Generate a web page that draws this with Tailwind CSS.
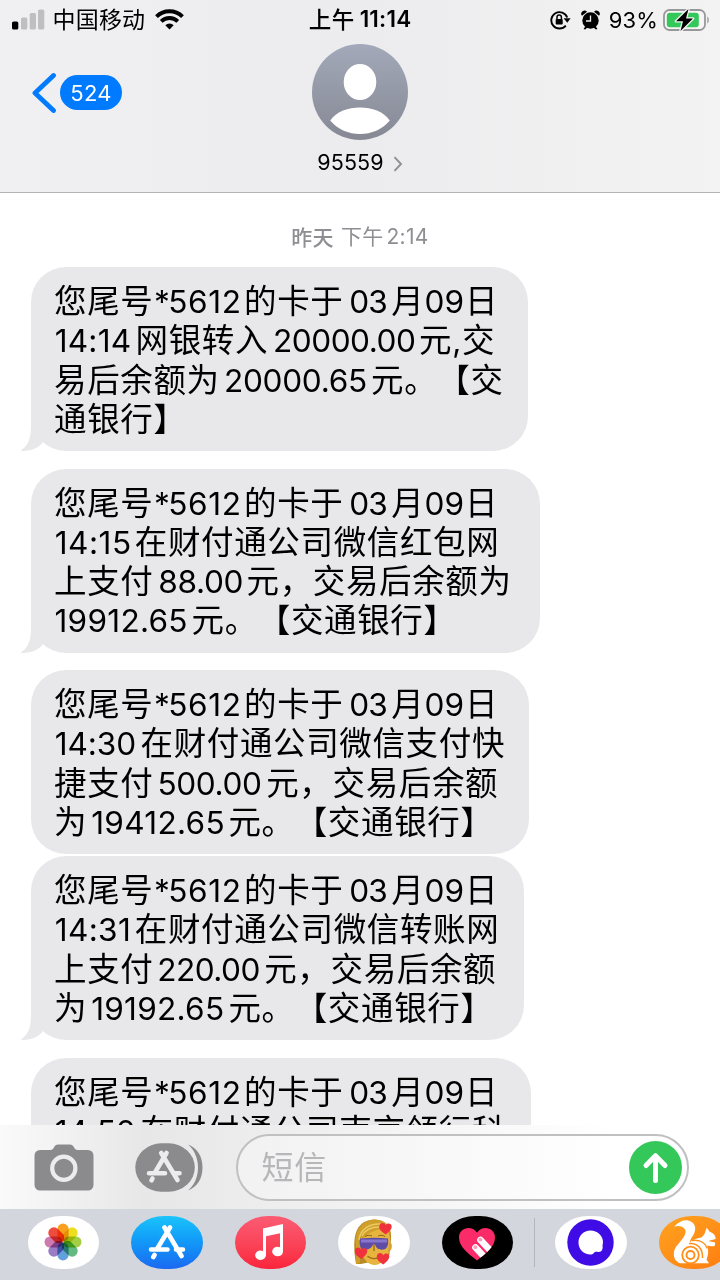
<!DOCTYPE html>
<html lang="zh-CN">
<head>
<meta charset="utf-8">
<title>95559</title>
<script src="https://cdn.jsdelivr.net/npm/@tailwindcss/browser@4"></script>
</head>
<body class="m-0 bg-white text-black [font-family:Inter,'Noto_Sans_CJK_SC',sans-serif]">
<div class="flex h-[1280px] w-[720px] flex-col overflow-hidden bg-white">

  <!-- Header -->
  <header class="flex h-[193px] shrink-0 flex-col border-b-[1.5px] border-[#b4b4b6] bg-linear-to-r from-[#f0f0f2] via-[#ececee] to-[#f3f3f3]">
    <div class="grid h-[40px] grid-cols-3 items-center">
      <div class="flex items-center pl-3">
        <svg class="mb-[2px] h-[21px] w-[33px]" viewBox="0 0 33 21"><rect x="0" y="12.5" width="6.3" height="8" rx="1.6"/><g fill="#bfbfc1"><rect x="9" y="8.500" width="6.300" height="12" rx="1.6"/><rect x="17.700" y="4" width="6.300" height="16.500" rx="1.6"/><rect x="26" y="0.500" width="6.300" height="20" rx="1.6"/></g></svg>
        <span class="mb-[3px] ml-[7.500px] text-[23px] leading-none tracking-[0.200px] whitespace-nowrap [font-family:'Noto_Sans_CJK_SC',sans-serif]">中国移动</span>
        <svg class="mb-[2px] ml-[10px] h-[21px] w-[29px] shrink-0" viewBox="0 0 29 21"><g fill="none" stroke="#000" stroke-width="3.900"><path d="M1.500 7.600a18.500 18.500 0 0 1 26 0"/><path d="M6.200 12.400a12 12 0 0 1 16.600 0"/></g><path d="M14.500 20.500l-4.200-4.300a6 6 0 0 1 8.400 0z"/></svg>
      </div>
      <div class="flex items-center justify-center gap-[5px] pb-[1px] text-[22.500px] leading-none"><span class="mb-[2px] font-medium tracking-[0.500px] [font-family:'Noto_Sans_CJK_SC',sans-serif]">上午</span><span class="font-semibold tracking-[0.200px]">11:14</span></div>
      <div class="flex items-center justify-end pr-[10px] pb-[1px]">
        <svg class="h-[20px] w-[21px]" viewBox="0 0 21 20"><path d="M15.800 15.600A8.200 8.200 0 1 1 17.200 7.500" fill="none" stroke="#000" stroke-width="1.900"/><path d="M13.600 8.200h7l-3.300 4.600z"/><rect x="5.700" y="8.900" width="7" height="5.600" rx=".8"/><path d="M7 9V7.300a2.200 2.200 0 0 1 4.400 0V9" fill="none" stroke="#000" stroke-width="1.500"/></svg>
        <svg class="ml-[10px] h-[20px] w-[19px]" viewBox="0 0 19 20"><circle cx="9.500" cy="10.500" r="8.200"/><path d="M1 5.800a3 3 0 0 1 5-4zM18 5.800a3 3 0 0 0-5-4zM2.500 19l2.500-3.500 2 1.500-2.800 2.500zM16.500 19L14 15.500 12 17l2.800 2.500z"/><path d="M9.500 5.500v5.500H5" fill="none" stroke="#eee" stroke-width="1.300"/></svg>
        <span class="ml-[9px] text-[22px] leading-none tracking-[0.100px]">93%</span>
        <svg class="ml-[5px] h-[24px] w-[47px]" viewBox="0 0 47 24"><rect x="1" y="2" width="41" height="20" rx="5.500" fill="#f6f6f6" stroke="#98989a" stroke-width="1.800"/><path d="M44.300 8.500c2 1 2 6 0 7z" fill="#98989a"/><rect x="3.800" y="4.700" width="32" height="14.600" rx="3" fill="#34c759"/><path d="M25.500 1L13 13.300h7L17.500 23 30 10.500h-7z" stroke="#f4f4f4" stroke-width="2.600" paint-order="stroke" stroke-linejoin="round"/></svg>
      </div>
    </div>
    <div class="grid grid-cols-3">
      <div class="flex h-[105px] items-center pl-8">
        <svg class="h-[42px] w-[25px]" viewBox="0 0 25 42"><path d="M21.500 3.500L3 21l18.500 17.500" fill="none" stroke="#007aff" stroke-width="4.800" stroke-linecap="round" stroke-linejoin="round"/></svg>
        <span class="ml-[3px] flex h-[35px] w-[62px] items-center justify-center rounded-full bg-[#007aff] text-[22px] leading-none tracking-[0.300px] text-white">524</span>
      </div>
      <div class="flex flex-col items-center pt-1">
        <svg class="h-[96px] w-[96px]" viewBox="0 0 96 96"><defs><linearGradient id="av" x1="0" y1="0" x2="0" y2="1"><stop offset="0" stop-color="#a3a9b9"/><stop offset="1" stop-color="#868994"/></linearGradient></defs><circle cx="48" cy="48" r="48" fill="url(#av)"/><ellipse cx="48" cy="38" rx="16.300" ry="18" fill="#fff"/><path d="M18.200 76.500C25 67.500 36 63.600 48 63.600s23 3.900 29.800 12.900C70 85.500 59.500 90 48 90s-22-4.500-29.800-13.500z" fill="#fff"/></svg>
        <div class="flex items-center pt-[12px]"><span class="text-[21.500px] leading-[20px] tracking-[0.100px]">95559</span><svg class="mt-[4px] ml-[9px] h-[16px] w-[10px]" viewBox="0 0 10 16"><path d="M1.500 1.200L8 8l-6.500 6.800" fill="none" stroke="#8e8e93" stroke-width="1.900"/></svg></div>
      </div>
    </div>
  </header>

  <!-- Conversation -->
  <main class="flex h-[932px] shrink-0 flex-col overflow-hidden text-[32.500px] leading-[39.330px] tracking-[0.640px] [font-family:'Noto_Sans_CJK_SC',sans-serif] [text-spacing-trim:space-all]">
    <div class="flex h-[74px] shrink-0 items-center justify-center gap-[7px] pt-[12px] text-[21px] leading-none tracking-[0.300px] text-[#8e8e93]"><span class="font-medium">昨天</span><span>下午<span class="ml-[3px] tracking-[0.300px] [font-family:Inter]">2:14</span></span></div>

    <div class="relative ml-[31px] h-[184px] w-[497px] shrink-0 rounded-[35px] bg-[#e8e8ea] pt-[12px] pl-[23px] whitespace-nowrap">
      <svg class="absolute bottom-0 left-[-11px] h-[40px] w-[24px]" viewBox="0 0 24 40"><path d="M11 0V14C11 27 9 34 .5 39.800 10 40.500 17.500 37.500 22.500 32L24 0z" fill="#e8e8ea"/></svg>
      <div class="relative h-[39.330px]">您尾号<span class="inline-block w-[90.600px] pl-[0.500px] text-[31.600px] leading-none tracking-[0.600px] [font-family:Inter]"><span class="tracking-[-1.500px]">*</span>5612</span>的卡于<span class="inline-block w-[47.900px] pl-[5.800px] text-[31.600px] leading-none tracking-[-0.800px] [font-family:Inter]">03</span>月<span class="inline-block w-[40.600px] text-[31.600px] leading-none tracking-normal [font-family:Inter]">09</span>日</div>
      <div class="relative h-[39.330px]"><span class="inline-block w-[81.500px] pl-[0.700px] text-[31.600px] leading-none tracking-[0.200px] [font-family:Inter]">14:14</span>网银转入<span class="inline-block w-[151px] pl-[5px] text-[31.600px] leading-none tracking-[-0.500px] [font-family:Inter]">20000.00</span>元<span class="inline-block w-[9.700px] text-[31.600px] leading-none tracking-normal [font-family:Inter]">,</span>交</div>
      <div class="relative h-[39.330px]">易后余额为<span class="inline-block w-[151.300px] pl-[4.300px] text-[31.600px] leading-none tracking-[-0.300px] [font-family:Inter]">20000.65</span>元。【交</div>
      <div class="relative h-[39.330px]">通银行】</div>
    </div>

    <div class="relative mt-[17.500px] ml-[31px] h-[184px] w-[509px] shrink-0 rounded-[35px] bg-[#e8e8ea] pt-[12px] pl-[23px] whitespace-nowrap">
      <svg class="absolute bottom-0 left-[-11px] h-[40px] w-[24px]" viewBox="0 0 24 40"><path d="M11 0V14C11 27 9 34 .5 39.800 10 40.500 17.500 37.500 22.500 32L24 0z" fill="#e8e8ea"/></svg>
      <div class="relative h-[39.330px]">您尾号<span class="inline-block w-[90.600px] pl-[0.500px] text-[31.600px] leading-none tracking-[0.600px] [font-family:Inter]"><span class="tracking-[-1.500px]">*</span>5612</span>的卡于<span class="inline-block w-[47.900px] pl-[5.800px] text-[31.600px] leading-none tracking-[-0.800px] [font-family:Inter]">03</span>月<span class="inline-block w-[40.600px] text-[31.600px] leading-none tracking-normal [font-family:Inter]">09</span>日</div>
      <div class="relative h-[39.330px]"><span class="inline-block w-[80.800px] pl-[0.700px] text-[31.600px] leading-none tracking-[0.500px] [font-family:Inter]">14:15</span>在财付通公司微信红包网</div>
      <div class="relative h-[39.330px]">上支付<span class="inline-block w-[93.100px] pl-[4.900px] text-[31.600px] leading-none tracking-[-0.350px] [font-family:Inter]">88.00</span>元，交易后余额为</div>
      <div class="relative h-[39.330px]"><span class="inline-block w-[137.500px] pl-[0.500px] text-[31.600px] leading-none tracking-[0.250px] [font-family:Inter]">19912.65</span>元。【交通银行】</div>
    </div>

    <div class="mt-[17.500px] ml-[31px] h-[184px] w-[498px] shrink-0 rounded-[35px] bg-[#e8e8ea] pt-[12px] pl-[23px] whitespace-nowrap">
      <div class="h-[39.330px]">您尾号<span class="inline-block w-[90.600px] pl-[0.500px] text-[31.600px] leading-none tracking-[0.600px] [font-family:Inter]"><span class="tracking-[-1.500px]">*</span>5612</span>的卡于<span class="inline-block w-[47.900px] pl-[5.800px] text-[31.600px] leading-none tracking-[-0.800px] [font-family:Inter]">03</span>月<span class="inline-block w-[40.600px] text-[31.600px] leading-none tracking-normal [font-family:Inter]">09</span>日</div>
      <div class="h-[39.330px]"><span class="inline-block w-[86.500px] pl-[0.700px] text-[31.600px] leading-none tracking-[-0.100px] [font-family:Inter]">14:30</span>在财付通公司微信支付快</div>
      <div class="h-[39.330px]">捷支付<span class="inline-block w-[112.800px] pl-[4px] text-[31.600px] leading-none tracking-[-0.400px] [font-family:Inter]">500.00</span>元，交易后余额</div>
      <div class="h-[39.330px]">为<span class="inline-block w-[141.300px] pl-[4px] text-[31.600px] leading-none tracking-[0.300px] [font-family:Inter]">19412.65</span>元。【交通银行】</div>
    </div>

    <div class="relative mt-[2px] ml-[31px] h-[184px] w-[493px] shrink-0 rounded-[35px] bg-[#e8e8ea] pt-[12px] pl-[23px] whitespace-nowrap">
      <svg class="absolute bottom-0 left-[-11px] h-[40px] w-[24px]" viewBox="0 0 24 40"><path d="M11 0V14C11 27 9 34 .5 39.800 10 40.500 17.500 37.500 22.500 32L24 0z" fill="#e8e8ea"/></svg>
      <div class="relative h-[39.330px]">您尾号<span class="inline-block w-[90.600px] pl-[0.500px] text-[31.600px] leading-none tracking-[0.600px] [font-family:Inter]"><span class="tracking-[-1.500px]">*</span>5612</span>的卡于<span class="inline-block w-[47.900px] pl-[5.800px] text-[31.600px] leading-none tracking-[-0.800px] [font-family:Inter]">03</span>月<span class="inline-block w-[40.600px] text-[31.600px] leading-none tracking-normal [font-family:Inter]">09</span>日</div>
      <div class="relative h-[39.330px]"><span class="inline-block w-[80.800px] pl-[0.700px] text-[31.600px] leading-none tracking-[0.350px] [font-family:Inter]">14:31</span>在财付通公司微信转账网</div>
      <div class="relative h-[39.330px]">上支付<span class="inline-block w-[110.800px] pl-[3.900px] text-[31.600px] leading-none tracking-[-0.550px] [font-family:Inter]">220.00</span>元，交易后余额</div>
      <div class="relative h-[39.330px]">为<span class="inline-block w-[141.300px] pl-[4px] text-[31.600px] leading-none tracking-[0.250px] [font-family:Inter]">19192.65</span>元。【交通银行】</div>
    </div>

    <div class="mt-[17.500px] ml-[31px] h-[184px] w-[500px] shrink-0 rounded-[35px] bg-[#e8e8ea] pt-[12px] pl-[23px] whitespace-nowrap">
      <div class="h-[39.330px]">您尾号<span class="inline-block w-[90.600px] pl-[0.500px] text-[31.600px] leading-none tracking-[0.600px] [font-family:Inter]"><span class="tracking-[-1.500px]">*</span>5612</span>的卡于<span class="inline-block w-[47.900px] pl-[5.800px] text-[31.600px] leading-none tracking-[-0.800px] [font-family:Inter]">03</span>月<span class="inline-block w-[40.600px] text-[31.600px] leading-none tracking-normal [font-family:Inter]">09</span>日</div>
      <div class="h-[39.330px]"><span class="inline-block w-[86.500px] pl-[0.700px] text-[31.600px] leading-none tracking-[-0.100px] [font-family:Inter]">14:50</span>在财付通公司南京领行科</div>
    </div>
  </main>

  <!-- Compose bar -->
  <section class="flex h-[84px] shrink-0 items-center bg-linear-to-r from-[#fafafa] from-0% via-[#e7e7e8] via-20% to-white to-85% pl-[33.500px]">
    <svg class="h-[47px] w-[60px]" viewBox="0 0 60 47"><path d="M6 6h10.500c1.800 0 2.600-.9 3.400-2.400C21 1.500 22 .5 24 .5h12c2 0 3 1 4.100 3.100.8 1.500 1.600 2.400 3.400 2.400H54a5.500 5.500 0 0 1 5.500 5.500V41a5.500 5.500 0 0 1-5.500 5.500H6A5.500 5.500 0 0 1 .5 41V11.500A5.500 5.500 0 0 1 6 6z" fill="#8b8b8d"/><circle cx="29.800" cy="24.300" r="11.600" fill="none" stroke="#ececee" stroke-width="4.200"/></svg>
    <svg class="ml-[41.500px] h-[49px] w-[68px]" viewBox="0 0 68 49"><path d="M53 1.500C62 5 67.500 13 67.500 24.500S62 44 53 47.500c6-5 10-13 10-23S59 6.500 53 1.500z" fill="#8b8b8d"/><rect x=".3" y=".3" width="59.500" height="48.400" rx="26" ry="24.200" fill="#8b8b8d"/><g fill="none" stroke="#ececee" stroke-width="4.600" stroke-linecap="round"><path d="M26.200 10L42.500 37M31.500 10L20 29.500M14 30.300h16M39 30.300h5.500M17.500 35.500l-1 1.800"/></g></svg>
    <div class="ml-[33px] flex h-[67px] w-[453px] items-center justify-between rounded-full border-2 border-[#c0c0c2] bg-white/30 pr-[5px] pl-[23.500px]">
      <span class="mb-[4px] text-[32px] leading-none tracking-[0.700px] text-[#b7b7b9] [font-family:'Noto_Sans_CJK_SC',sans-serif]">短信</span>
      <svg class="h-[53px] w-[53px]" viewBox="0 0 53 53"><circle cx="26.500" cy="26.500" r="26.500" fill="#34c759"/><path d="M26.500 39.500V15M17 24.500l9.500-9.800 9.500 9.800" fill="none" stroke="#fff" stroke-width="5" stroke-linecap="round" stroke-linejoin="round"/></svg>
    </div>
  </section>

  <!-- App strip -->
  <nav class="flex h-[71px] shrink-0 items-start bg-[#d3d6dd] pt-[6.500px] pl-[27.500px]">
    <div class="flex h-[53px] w-[71.500px] shrink-0 items-center justify-center rounded-[33px/26.500px] bg-white">
      <svg class="h-[40px] w-[40px]" viewBox="-20 -20 40 40"><g><rect x="-5.600" y="-18.500" width="11.200" height="18" rx="5.600" fill="#f9a11f"/><rect class="mix-blend-multiply" x="-5.600" y="-18.500" width="11.200" height="18" rx="5.600" fill="#ecdf20" transform="rotate(45)"/><rect class="mix-blend-multiply" x="-5.600" y="-18.500" width="11.200" height="18" rx="5.600" fill="#a4cf45" transform="rotate(90)"/><rect class="mix-blend-multiply" x="-5.600" y="-18.500" width="11.200" height="18" rx="5.600" fill="#62ba80" transform="rotate(135)"/><rect class="mix-blend-multiply" x="-5.600" y="-18.500" width="11.200" height="18" rx="5.600" fill="#62a0dc" transform="rotate(180)"/><rect class="mix-blend-multiply" x="-5.600" y="-18.500" width="11.200" height="18" rx="5.600" fill="#9a7cc4" transform="rotate(225)"/><rect class="mix-blend-multiply" x="-5.600" y="-18.500" width="11.200" height="18" rx="5.600" fill="#cf7aae" transform="rotate(270)"/><rect class="mix-blend-multiply" x="-5.600" y="-18.500" width="11.200" height="18" rx="5.600" fill="#f04c3e" transform="rotate(315)"/></g></svg>
    </div>
    <div class="ml-[32px] flex h-[53px] w-[71.500px] shrink-0 items-center justify-center rounded-[33px/26.500px] bg-linear-to-b from-[#1cc3fb] to-[#1d68f1]">
      <svg class="h-[36px] w-[40px]" viewBox="0 0 40 36"><g fill="none" stroke="#fff" stroke-width="4.600" stroke-linecap="round"><path d="M17.500 3.500L34.500 32M23 3.500L10 25M4 25.500h16.500M29 25.500h7M7.500 31l-1.200 2"/></g></svg>
    </div>
    <div class="ml-[32px] flex h-[53px] w-[71.500px] shrink-0 items-center justify-center rounded-[33px/26.500px] bg-linear-to-b from-[#fb5b74] to-[#fa233b]">
      <svg class="mr-[3px] h-[38px] w-[30px]" viewBox="0 0 30 38"><path d="M9 5.500L29 1v27.500a5.400 4.800 0 1 1-3-4.300V10.200L12 13.300v18.900a5.400 4.800 0 1 1-3-4.300z" fill="#fff"/></svg>
    </div>
    <div class="ml-[32px] flex h-[53px] w-[71.500px] shrink-0 items-center justify-center rounded-[33px/26.500px] bg-white">
      <svg class="h-[48px] w-[42px]" viewBox="0 0 42 48"><path d="M3 46C1 34 0 20 4 12 8 3 18 0 26 2c8 2 13 9 12 20l-2 18-28 6z" fill="#b98a25"/><path d="M9 22c2-8 10-14 26-10 3 8 3 18 0 24-3 7-8 11-13.500 11S10 42 9 34z" fill="#e8b440"/><path d="M36 25c4-2 4 8-1 9z" fill="#d9a036"/><path d="M3 28C1 14 8 2 22 1.500 32 2 37 7 38 16c-7-5-13-5-17-3C14 16 9 19 8 29l-1 16-4 1z" fill="#cf9f2c"/><path d="M6 22C7 12 16 5 28 6M9 18c3-6 9-9 17-9" fill="none" stroke="#ecc860" stroke-width="1.500"/><path d="M12 18.500c2-1.500 5-1.500 7-.5M25 18c2-1 5-1 7 .5" fill="none" stroke="#8a5f14" stroke-width="1"/><path d="M7 20.500c9-1 19-1 28 0 .8 5-.5 10.500-4 11-5 .5-7 0-9-5h-2c-2 5-6 5.500-10 5-3-.6-4-6-3-11z" fill="#5f4ca6"/><path d="M8 21.500h26v3H8z" fill="#8776cc"/><path d="M21 27v5.500M15 38.500c4 2.800 8 2.800 12 0" fill="none" stroke="#a06a17" stroke-width="1.400" stroke-linecap="round"/><g fill="#f0323c"><path id="h" d="M33 16.500c-5-3-7.500-5.500-6.500-9 1-3.300 5-3 6.200-.3 1.700-2.700 6-1.900 6 1.500 0 3-3 5-5.700 7.800z"/><use href="#h" transform="translate(-24.500 24.500)"/><use href="#h" transform="translate(-2.500 30)"/></g></svg>
    </div>
    <div class="ml-[32px] flex h-[53px] w-[71.500px] shrink-0 items-center justify-center rounded-[33px/26.500px] bg-black">
      <svg class="mt-[4px] h-[34px] w-[38px]" viewBox="0 0 38 34"><defs><clipPath id="ht"><path d="M19 33.500C10 26.500 1 19.500 1 10.500 1 1 13-2.500 19 5.500 25-2.500 37 1 37 10.500c0 9-9 16-18 23z"/></clipPath></defs><g clip-path="url(#ht)"><rect width="38" height="34" fill="#fb2b69"/><g stroke="#fff" stroke-width="6.600" stroke-linecap="round"><path d="M22.500 13l14 15M17.500 20.500l14 15"/></g><circle cx="22.400" cy="12.600" r="1.900" fill="#fb9dba"/><circle cx="17.400" cy="20.200" r="1.900" fill="#fb9dba"/></g></svg>
    </div>
    <div class="mt-[2px] ml-[20.500px] h-[49px] w-[1.500px] shrink-0 bg-[#b4b6bb]"></div>
    <div class="ml-[20px] flex h-[53px] w-[71.500px] shrink-0 items-center justify-center rounded-[33px/26.500px] bg-white">
      <svg class="mr-[1px] h-[47px] w-[47px]" viewBox="0 0 47 47"><circle cx="23.500" cy="23.500" r="23.200" fill="#400ce5"/><path d="M23.500 11.500c7 0 12.500 5 12.500 12l-.5 3c.5 2.200 0 5-1.800 6-1.700.9-5-.2-6.200.7-1 1.500-2.500 2.300-4 2.300-7 0-12-5.300-12-12s5-12 12-12z" fill="#fff"/></svg>
    </div>
    <div class="ml-[32px] flex h-[53px] w-[71.500px] shrink-0 items-center rounded-[33px/26.500px] bg-linear-to-br from-[#ffa31f] to-[#ff7b10] pl-[13px]">
      <svg class="h-[46px] w-[48px]" viewBox="0 0 48 46"><path d="M2 7.500C7 2.500 12 .8 16 1.500c6.500 1.200 8.500 7 6.500 12-1.500 4-4.500 6.500-4.500 10 3-3.500 7.500-4.500 11.500-5l3-3.500 2.200-6.500 3 4.300c4 1.200 6 4 6 7.200-2.500 1-5.500 1-7.500 2l7 1.500-.5 3.500c-3 .5-5.500.2-7.500-.6 1.800 5 .8 10.600-.7 14l2.500 3.800H8C3 42.500.8 37.500 2.300 31.500 4 25.500 12.500 20 13.500 13.500 14.300 9 9 5.500 2 7.500z" fill="#fff"/><g fill="none" stroke="#ff8f18"><circle cx="18.500" cy="36" r="8.300" stroke-width="1.800"/><circle cx="18.500" cy="36" r="4" stroke-width="1.900"/><path d="M17 24.500c8-1 14 5 13.500 14.500M20 21.500c8-1 13.500 2.500 15.500 8" stroke-width="1.500"/></g></svg>
    </div>
  </nav>
</div>
</body>
</html>
